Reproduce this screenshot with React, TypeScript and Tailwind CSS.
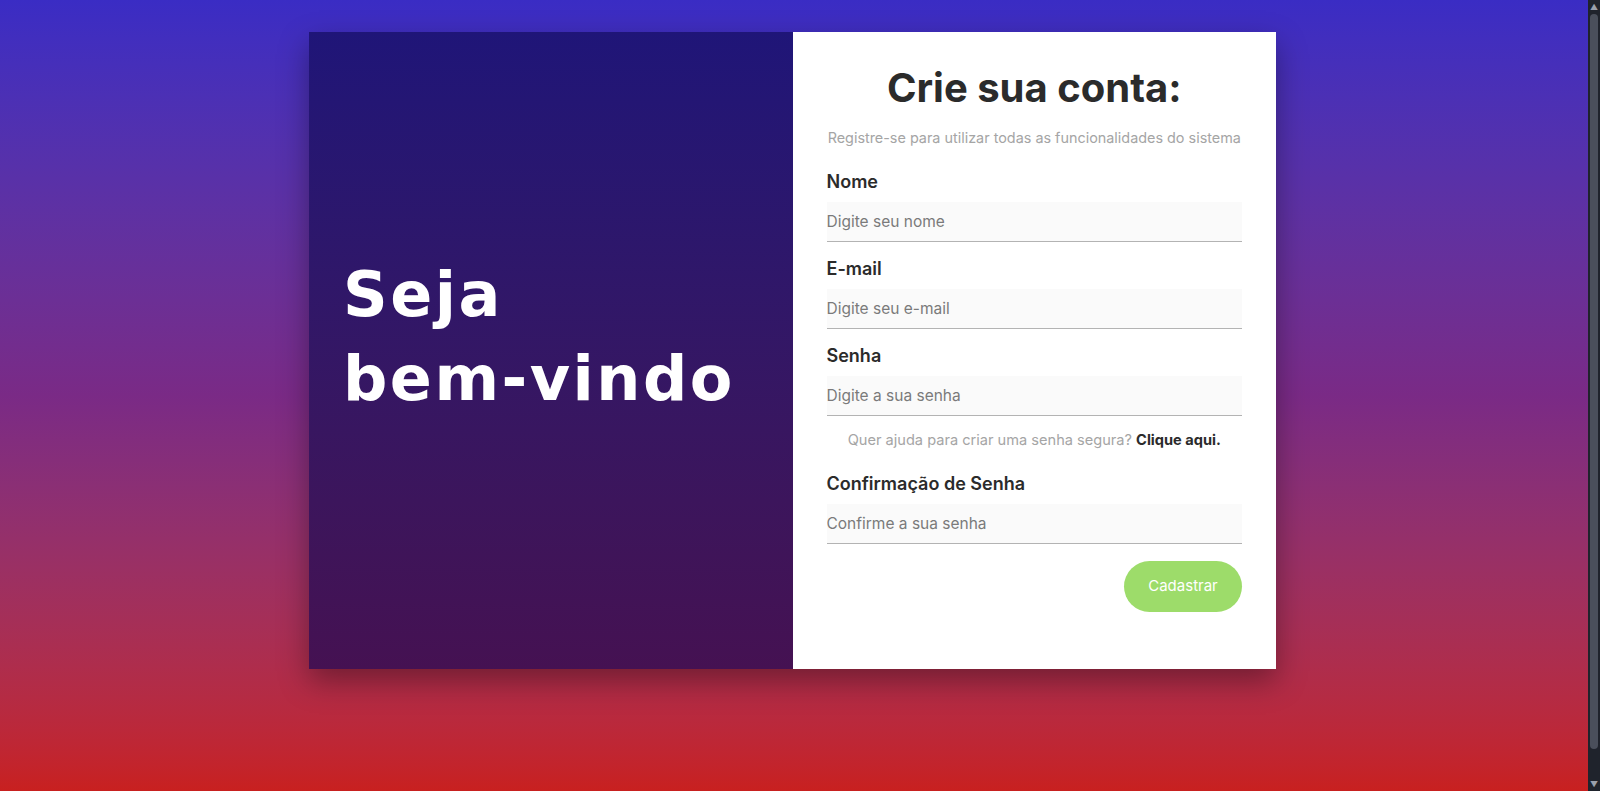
export default function App() {
  const fields = [
    { label: 'Nome', placeholder: 'Digite seu nome', type: 'text' },
    { label: 'E-mail', placeholder: 'Digite seu e-mail', type: 'email' },
    { label: 'Senha', placeholder: 'Digite a sua senha', type: 'password' },
  ]

  return (
    <div className="flex h-[791px] w-full overflow-hidden" style={{ fontFamily: "Inter, 'Open Sans', sans-serif" }}>
      <main className="flex flex-1 justify-center h-full pr-[3px] bg-linear-to-b from-[#3a2cc4] via-[#7a2a86] to-[#c8201f]">
        <div className="mt-8 flex h-fit w-[967px] shadow-[0_12px_28px_rgba(0,0,0,0.35)]">
          {/* Boas-vindas */}
          <section className="flex w-1/2 items-center bg-linear-to-b from-[#1f1578] to-[#451152] pl-[34px] pb-[28px]">
            <h2
              className="text-[62px] font-bold leading-[84px] tracking-[0.04em] text-white"
              style={{ fontFamily: "'DejaVu Sans', sans-serif" }}
            >
              Seja
              <br />
              bem-vindo
            </h2>
          </section>

          {/* Formulario */}
          <section className="flex w-1/2 flex-col bg-white px-[34px] pt-[32px] pb-[57px]">
            <h1 className="text-center text-[40px] font-bold leading-[48px] text-[#2b2b2b]">Crie sua conta:</h1>
            <p className="mt-[16px] text-center text-[14.4px] leading-[20px] text-[#a5a5a5]">
              Registre-se para utilizar todas as funcionalidades do sistema
            </p>

            {fields.map((f, i) => (
              <div key={f.label} className={i === 0 ? 'mt-[24px]' : 'mt-[17px]'}>
                <label className="block text-[18px] font-semibold leading-[20px] text-[#2b2b2b]">{f.label}</label>
                <input
                  type={f.type}
                  placeholder={f.placeholder}
                  className="mt-[10px] block h-[40px] w-full border-b border-[#b3b3b3] bg-[#fafafa] text-[15.5px] text-[#555] placeholder:text-[#7a7a7a] focus:outline-none"
                />
              </div>
            ))}

            <p className="mt-[14px] text-center text-[14.6px] leading-[20px] text-[#a5a5a5]">
              Quer ajuda para criar uma senha segura? <span className="font-bold text-[#2b2b2b]">Clique aqui.</span>
            </p>

            <div className="mt-[24px]">
              <label className="block text-[18px] font-semibold leading-[20px] text-[#2b2b2b]">Confirmação de Senha</label>
              <input
                type="password"
                placeholder="Confirme a sua senha"
                className="mt-[10px] block h-[40px] w-full border-b border-[#b3b3b3] bg-[#fafafa] text-[15.5px] text-[#555] placeholder:text-[#7a7a7a] focus:outline-none"
              />
            </div>

            <div className="mt-[17px] flex justify-end">
              <button className="h-[51px] w-[118px] rounded-full bg-[#9ddc6a] text-[15px] text-white">Cadastrar</button>
            </div>
          </section>
        </div>
      </main>

      {/* barra de rolagem */}
      <div className="flex h-full w-[12px] flex-col items-center bg-[#1f232c]">
        <span className="mt-[3px] text-[8px] leading-[8px] text-[#9aa0ac]">▲</span>
        <div className="mt-[3px] h-[735px] w-[8px] rounded-full bg-[#4a4f5b]" />
        <span className="mt-auto mb-[3px] text-[8px] leading-[8px] text-[#9aa0ac]">▼</span>
      </div>
    </div>
  )
}
